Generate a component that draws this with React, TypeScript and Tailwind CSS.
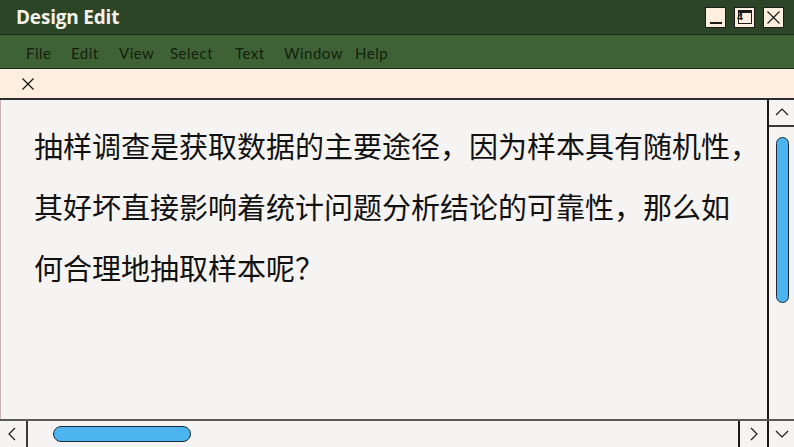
import React from "react";

// label + slot width of each menu entry
const MENU: [string, string][] = [
  ["File", "w-[45px]"],
  ["Edit", "w-[48px]"],
  ["View", "w-[51px]"],
  ["Select", "w-[65px]"],
  ["Text", "w-[49px]"],
  ["Window", "w-[71px]"],
  ["Help", "w-[40px]"],
];

const LINES = [
  "抽样调查是获取数据的主要途径，因为样本具有随机性，",
  "其好坏直接影响着统计问题分析结论的可靠性，那么如",
  "何合理地抽取样本呢？",
];

function Chevron({ dir }: { dir: "up" | "down" | "left" | "right" }) {
  const d = {
    up: "M3 11 L9 5 L15 11",
    down: "M3 6 L9 12 L15 6",
    left: "M11 3 L5 9 L11 15",
    right: "M6 3 L12 9 L6 15",
  }[dir];
  return (
    <svg width="18" height="18" viewBox="0 0 18 18" fill="none" stroke="#1a1a1a" strokeWidth="1.2">
      <path d={d} />
    </svg>
  );
}

export default function App() {
  return (
    <div className="flex h-[447px] w-[794px] flex-col overflow-hidden bg-[#f6f4f2]">
      {/* title bar */}
      <header className="flex h-[35px] shrink-0 items-center justify-between border-b border-[#1c2a18] bg-[#2d4527] pl-4 pr-[10px]">
        <h1 className="pt-px font-['Open_Sans',sans-serif] text-[19px] font-bold tracking-[-0.2px] text-[#f4f1ea]">
          Design Edit
        </h1>
        <div className="flex gap-2">
          <button className="flex h-[21px] w-[21px] items-end justify-center border border-[#1c1c1c] bg-[#fdeedf] pb-[3px]">
            <span className="h-[2px] w-[12px] bg-[#1a1a1a]" />
          </button>
          <button className="relative flex h-[21px] w-[21px] items-center justify-center border border-[#1c1c1c] bg-[#fdeedf]">
            <span className="h-[14px] w-[14px] border border-[#1a1a1a] border-t-[3px]" />
            <span className="absolute left-[2px] top-[5px] font-['DejaVu_Sans',sans-serif] text-[9px] font-bold leading-none text-[#1a1a1a]">4</span>
          </button>
          <button className="flex h-[21px] w-[21px] items-center justify-center border border-[#1c1c1c] bg-[#fdeedf]">
            <svg width="15" height="15" viewBox="0 0 15 15" stroke="#1a1a1a" strokeWidth="1.2">
              <path d="M1.5 1.5 L13.5 13.5 M13.5 1.5 L1.5 13.5" />
            </svg>
          </button>
        </div>
      </header>

      {/* menu bar */}
      <nav className="flex h-[34px] shrink-0 items-center border-b border-[#1c2a18] bg-[#3e6236] pl-[26px] pt-[3px] font-['Lato',sans-serif] text-[15px] tracking-[0.5px] text-[#15200e]">
        {MENU.map(([m, w]) => (
          <span key={m} className={w}>
            {m}
          </span>
        ))}
      </nav>

      {/* tab strip */}
      <div className="flex h-[31px] shrink-0 items-center border-b-2 border-[#2b2b2b] bg-[#fdeedf] pl-[21px]">
        <svg width="14" height="14" viewBox="0 0 14 14" stroke="#111" strokeWidth="1.2">
          <path d="M1.5 1.5 L12.5 12.5 M12.5 1.5 L1.5 12.5" />
        </svg>
      </div>

      {/* document area */}
      <div className="flex min-h-0 flex-1">
        <main className="min-w-0 flex-1 border-l border-[#c9b5b5] pl-[33px] pt-[15px] font-['Noto_Sans_CJK_SC','Noto_Sans_CJK_JP',sans-serif] text-[29px] leading-[61px] text-[#111]">
          {LINES.map((l) => (
            <p key={l} className="whitespace-nowrap">
              {l}
            </p>
          ))}
        </main>
        <aside className="flex w-[27px] shrink-0 flex-col border-l-2 border-[#1a1a1a]">
          <div className="flex h-[27px] items-center justify-center border-b-2 border-[#3a3a3a]">
            <Chevron dir="up" />
          </div>
          <div className="pl-[7px] pt-[10px]">
            <div className="h-[166px] w-[13px] rounded-full border border-[#1f2a36] bg-[#4cb4ef]" />
          </div>
        </aside>
      </div>

      {/* bottom scroll bar */}
      <footer className="flex h-[28px] shrink-0 border-t-2 border-[#5a5a5a]">
        <div className="flex w-[28px] items-center justify-center border-r-2 border-[#3a3a3a]">
          <Chevron dir="left" />
        </div>
        <div className="flex flex-1 items-center pl-[25px]">
          <div className="h-[16px] w-[138px] rounded-full border border-[#1f2a36] bg-[#4cb4ef]" />
        </div>
        <div className="flex w-[29px] items-center justify-center border-l-2 border-[#1a1a1a]">
          <Chevron dir="right" />
        </div>
        <div className="flex w-[27px] items-center justify-center border-l-2 border-[#1a1a1a]">
          <Chevron dir="down" />
        </div>
      </footer>
    </div>
  );
}
